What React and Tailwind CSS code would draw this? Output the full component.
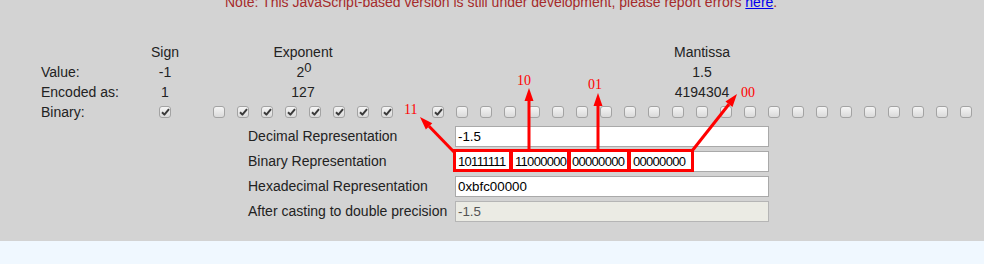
import React from 'react';

const font = { fontFamily: '"Liberation Sans", Arial, sans-serif' };

// Checkbox drawn as the old Chrome style
const Box = ({ checked }) => (
  <div className="w-[24px] flex justify-center">
    <span className="w-[12px] h-[12px] rounded-[3px] border border-[#a3a3a3] bg-linear-to-b from-[#f5f5f5] to-[#dadada] flex items-center justify-center">
      {checked && (
        <svg width="9" height="8" viewBox="0 0 9 8">
          <path d="M1 4.2 L3.4 6.6 L8 1.2" fill="none" stroke="#3a3a3a" strokeWidth="2" strokeLinejoin="round" />
        </svg>
      )}
    </span>
  </div>
);

const Row = ({ label, sign, exponent, mantissa }) => (
  <div className="flex items-center h-[20px] text-[14px] text-[#222]">
    <div className="w-[99px]">{label}</div>
    <div className="w-[50px] flex justify-center">{sign}</div>
    <div className="w-[226px] flex justify-center">{exponent}</div>
    <div className="ml-[10px] w-[552px] flex justify-center">{mantissa}</div>
  </div>
);

const FormRow = ({ label, children }) => (
  <div className="flex items-center h-[21px] mt-[4px] text-[14px] text-[#222]">
    <div className="w-[207px]">{label}</div>
    {children}
  </div>
);

const Arrow = ({ x1, y1, x2, y2 }) => {
  const dx = x2 - x1;
  const dy = y2 - y1;
  const len = Math.sqrt(dx * dx + dy * dy);
  const ux = dx / len;
  const uy = dy / len;
  const bx = x2 - ux * 13;
  const by = y2 - uy * 13;
  const nx = -uy * 4.5;
  const ny = ux * 4.5;
  return (
    <g>
      <line x1={x1} y1={y1} x2={bx} y2={by} stroke="#ff0000" strokeWidth="3" />
      <polygon points={`${x2},${y2} ${bx + nx},${by + ny} ${bx - nx},${by - ny}`} fill="#ff0000" />
    </g>
  );
};

export default function App() {
  const expBits = [0, 1, 1, 1, 1, 1, 1, 1];
  const manBits = Array.from({ length: 23 }, (_, i) => (i === 0 ? 1 : 0));
  const segments = ['10111111', '11000000', '00000000', '00000000'];
  const segWidths = ['w-[57px]', 'w-[57px]', 'w-[61px]', 'w-[60px]'];

  return (
    <div className="relative w-[984px] h-[264px] bg-[#f0f8ff] overflow-hidden" style={font}>
      <div className="bg-[#d3d3d3] h-[241px] overflow-hidden">
        <div className="-mt-[6px] h-[16px] leading-[16px] pl-[225px] whitespace-nowrap text-[14px] text-[#a52a2a]">
          Note: This JavaScript-based version is still under development, please report errors{' '}
          <a className="text-[#0000ee] underline">here</a>.
        </div>

        <div className="mt-[32px] pl-[41px]">
          <Row label="" sign="Sign" exponent="Exponent" mantissa="Mantissa" />
          <Row
            label="Value:"
            sign="-1"
            exponent={
              <span className="pl-[2px]">
                2<span className="text-[13px] relative -top-[5px]">0</span>
              </span>
            }
            mantissa="1.5"
          />
          <Row label="Encoded as:" sign="1" exponent="127" mantissa="4194304" />
          <Row
            label="Binary:"
            sign={<Box checked />}
            exponent={<div className="flex">{expBits.map((b, i) => <Box key={i} checked={b === 1} />)}</div>}
            mantissa={<div className="flex">{manBits.map((b, i) => <Box key={i} checked={b === 1} />)}</div>}
          />
        </div>

        <div className="pl-[248px]">
          <FormRow label="Decimal Representation">
            <div className="w-[314px] h-[21px] border border-[#a9a9a9] bg-white pl-[2px] text-[13.33px] leading-[19px] text-black">-1.5</div>
          </FormRow>
          <FormRow label="Binary Representation">
            <div className="w-[314px] h-[21px] border border-[#a9a9a9] bg-white pl-[2px] flex text-[13px] leading-[19px] tracking-[-0.7px] text-black">
              {segments.map((s, i) => (
                <span key={i} className={segWidths[i]}>{s}</span>
              ))}
            </div>
          </FormRow>
          <FormRow label="Hexadecimal Representation">
            <div className="w-[314px] h-[21px] border border-[#a9a9a9] bg-white pl-[2px] text-[13.33px] leading-[19px] text-black">0xbfc00000</div>
          </FormRow>
          <FormRow label="After casting to double precision">
            <div className="w-[314px] h-[21px] border border-[#b5b5b5] bg-[#ebebe4] pl-[2px] text-[13.33px] leading-[19px] text-[#545454]">-1.5</div>
          </FormRow>
        </div>
      </div>

      <svg className="absolute left-0 top-0 pointer-events-none" width="984" height="264">
        <rect x="454.5" y="150.5" width="56" height="20" fill="none" stroke="#ff0000" strokeWidth="3" />
        <rect x="511.5" y="150.5" width="57" height="20" fill="none" stroke="#ff0000" strokeWidth="3" />
        <rect x="569.5" y="150.5" width="59" height="20" fill="none" stroke="#ff0000" strokeWidth="3" />
        <rect x="629.5" y="150.5" width="63" height="20" fill="none" stroke="#ff0000" strokeWidth="3" />
        <Arrow x1={454} y1={152} x2={420} y2={117} />
        <Arrow x1={529} y1={150} x2={529} y2={88} />
        <Arrow x1={598} y1={150} x2={598} y2={93} />
        <Arrow x1={692} y1={151} x2={737} y2={94} />
        <g fill="#ff0000" fontSize="14" style={{ fontFamily: '"Liberation Serif", "Times New Roman", serif' }}>
          <text x="404" y="114">11</text>
          <text x="517" y="85">10</text>
          <text x="588" y="89">01</text>
          <text x="741" y="97">00</text>
        </g>
      </svg>
    </div>
  );
}
